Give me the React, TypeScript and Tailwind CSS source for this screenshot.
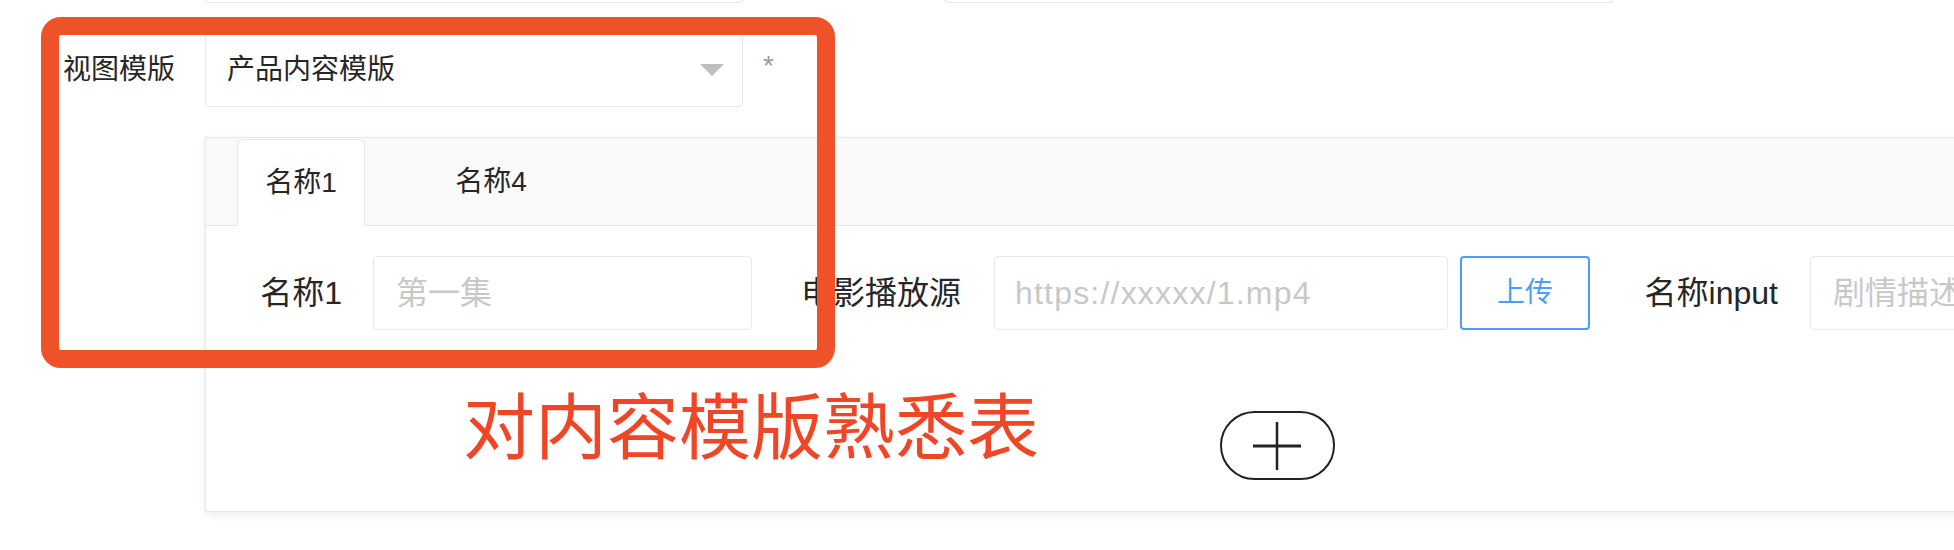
import React from 'react';

const FONT = "font-['Liberation_Sans','Noto_Sans_CJK_SC',sans-serif]";

export default function App() {
  return (
    <div className={`relative w-[1954px] h-[550px] overflow-hidden bg-white text-[#262626] ${FONT}`}>
      {/* bottom edges of the previous form row */}
      <div className="flex h-[3px]">
        <div className="ml-[205px] w-[538px] h-full border-x border-b border-[#e8e8e8] rounded-b-[4px]" />
        <div className="ml-[202px] w-[668px] h-full border-x border-b border-[#e8e8e8] rounded-b-[4px]" />
      </div>

      {/* 视图模版 row */}
      <div className="mt-[30px] flex items-center h-[74px]">
        <label className="w-[205px] pr-[30px] text-right text-[28px] leading-none">视图模版</label>
        <div className="w-[538px] h-full border border-[#e8e8e8] rounded-[4px] flex items-center justify-between pl-[21px] pr-[18px]">
          <span className="text-[28px] leading-none">产品内容模版</span>
          <svg width="24" height="12" viewBox="0 0 24 12">
            <polygon points="0,0 24,0 12,12" fill="#bfbfbf" />
          </svg>
        </div>
        <span className="ml-[20px] -mt-[8px] text-[28px] leading-none text-[#999]">*</span>
      </div>

      {/* content template card */}
      <div className="ml-[205px] mt-[30px] w-[2144px] h-[375px] border border-[#e8e8e8] bg-white shadow-[0_3px_8px_rgba(0,0,0,0.08)] flex flex-col">
        <div className="h-[88px] bg-[#fafafa] border-b border-[#e8e8e8] flex items-end">
          <div className="ml-[31px] -mb-px w-[128px] h-[87px] bg-white border border-b-0 border-[#e8e8e8] rounded-t-[6px] flex items-center justify-center text-[28px] leading-none">
            名称1
          </div>
          <div className="ml-[62px] w-[128px] h-[87px] flex items-center justify-center text-[28px] leading-none">
            名称4
          </div>
        </div>

        <div className="pt-[30px] pl-[56px] flex items-center h-[104px] text-[32px] leading-none whitespace-nowrap">
          <label className="shrink-0 w-[111px] pr-[31px] flex justify-end">名称1</label>
          <div className="shrink-0 w-[379px] h-[74px] border border-[#e8e8e8] rounded-[4px] flex items-center pl-[22px] text-[#c8c8c8]">
            第一集
          </div>
          <label className="shrink-0 w-[242px] pr-[33px] flex justify-end">电影播放源</label>
          <div className="shrink-0 w-[454px] h-[74px] border border-[#e8e8e8] rounded-[4px] flex items-center pl-[20px] text-[#c8c8c8] tracking-[1.2px]">
            https://xxxxx/1.mp4
          </div>
          <button className="shrink-0 ml-[12px] w-[130px] h-[74px] border-2 border-[#4a9ef7] rounded-[4px] text-[28px] text-[#4a9ef7] flex items-center justify-center">
            上传
          </button>
          <label className="shrink-0 w-[220px] pr-[32px] flex justify-end">名称input</label>
          <div className="shrink-0 w-[379px] h-[74px] border border-[#e8e8e8] rounded-[4px] flex items-center pl-[22px] text-[#c8c8c8]">
            剧情描述
          </div>
        </div>

        <div className="mt-[81px] flex justify-center">
          <button className="w-[115px] h-[69px] rounded-full border-2 border-[#222] flex items-center justify-center">
            <svg width="48" height="48" viewBox="0 0 48 48">
              <line x1="0" y1="24" x2="48" y2="24" stroke="#222" strokeWidth="3" />
              <line x1="24" y1="0" x2="24" y2="48" stroke="#222" strokeWidth="2.5" />
            </svg>
          </button>
        </div>
      </div>

      {/* annotation overlay */}
      <div className="absolute left-[41px] top-[17px] w-[794px] h-[351px] border-[18px] border-[#ef5128] rounded-[20px]" />
      <div className="absolute left-[463px] top-[392px] text-[72px] leading-none text-[#ee4626]">
        对内容模版熟悉表
      </div>
    </div>
  );
}
